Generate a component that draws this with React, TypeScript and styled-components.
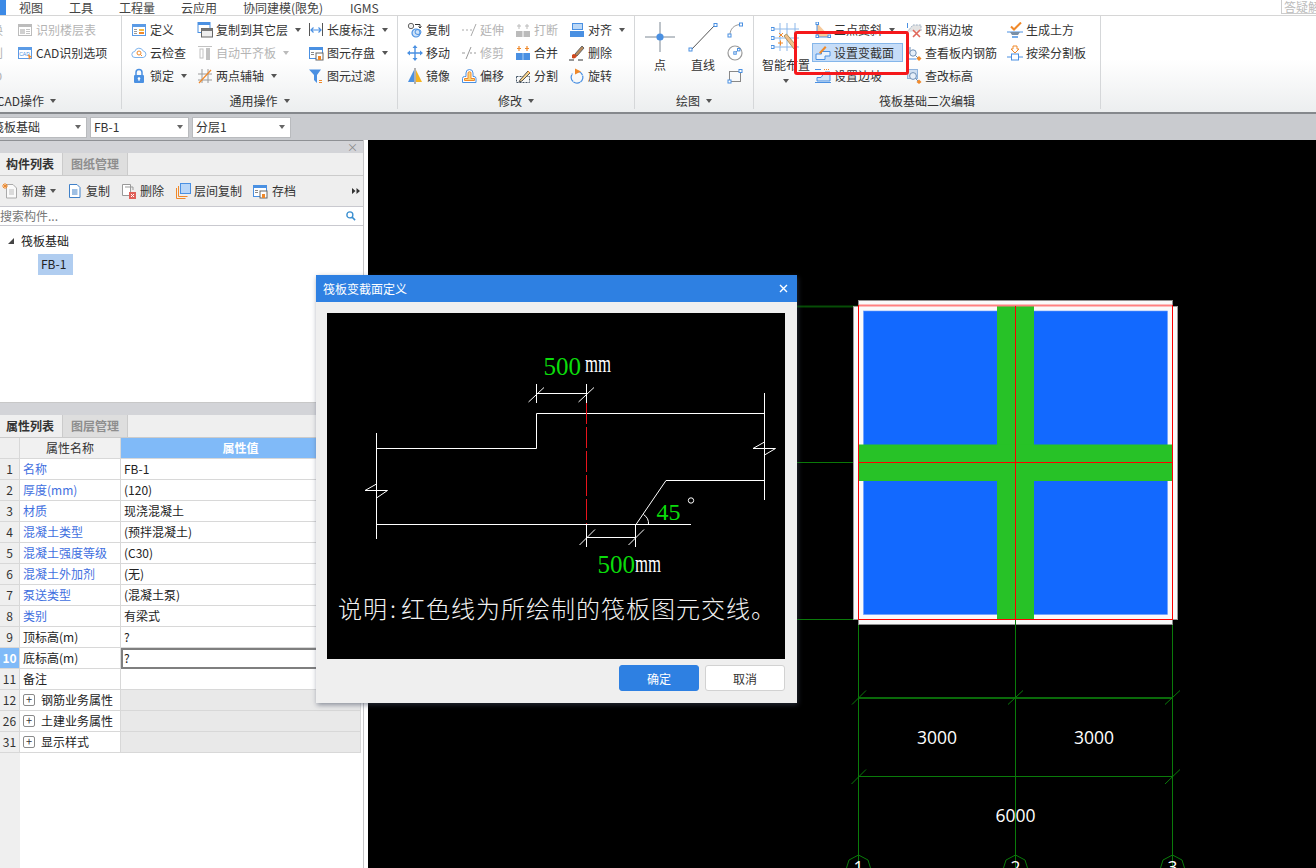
import React from "react";
import styled, { createGlobalStyle } from "styled-components";

const FONT = `"Noto Sans CJK SC", "Noto Sans", sans-serif`;
const B = "#4a90e2";
const O = "#f0892a";
const GR = "#c2c2c2";
const D = "#7c8894";

const Global = createGlobalStyle`
  html, body { margin: 0; padding: 0; overflow: hidden; background: #fff; }
  * { box-sizing: border-box; }
`;

const Root = styled.div`
  position: relative;
  width: 1316px;
  height: 868px;
  overflow: hidden;
  display: flex;
  flex-direction: column;
  font: 12px/16px ${FONT};
  color: #333;
`;

/* ---------- menu ---------- */
const MenuBar = styled.div`
  height: 16px;
  flex: none;
  display: flex;
  align-items: center;
  background: #fff;
  border-bottom: 1px solid #d6d6d6;
`;
const MenuStub = styled.div`
  width: 6px;
  height: 15px;
  margin: 0 13px 0 0;
  background: #3c8ae6;
`;
const MenuItem = styled.span<{ $w: number }>`
  width: ${(p) => p.$w}px;
  flex: none;
  white-space: nowrap;
  color: #444;
`;
const HelpBox = styled.div`
  position: absolute;
  left: 1281px;
  top: -1px;
  width: 40px;
  height: 15px;
  border: 1px solid #ccc;
  color: #bbb;
  padding-left: 2px;
  line-height: 14px;
  white-space: nowrap;
  overflow: hidden;
`;

/* ---------- ribbon ---------- */
const Ribbon = styled.div`
  height: 98px;
  flex: none;
  display: flex;
  background: linear-gradient(#fff 0%, #fff 45%, #eceeef 100%);
  border-bottom: 2px solid #85888c;
`;
const Group = styled.div<{ $w: number }>`
  width: ${(p) => p.$w}px;
  flex: none;
  display: flex;
  flex-direction: column;
  padding-top: 4px;
  border-right: 1px solid #d5d7d9;
  margin-bottom: 3px;
  overflow: hidden;
`;
const GroupBody = styled.div<{ $pad?: number; $end?: boolean }>`
  height: 73px;
  display: flex;
  padding-left: ${(p) => p.$pad ?? 6}px;
  justify-content: ${(p) => (p.$end ? "flex-end" : "flex-start")};
`;
const GroupLabel = styled.div<{ $endGap?: number }>`
  height: 16px;
  display: flex;
  align-items: center;
  justify-content: ${(p) => (p.$endGap ? "flex-end" : "center")};
  padding-right: ${(p) => p.$endGap ?? 0}px;
  gap: 6px;
  white-space: nowrap;
`;
const Col = styled.div<{ $w?: number }>`
  width: ${(p) => (p.$w ? `${p.$w}px` : "auto")};
  flex: none;
  display: flex;
  flex-direction: column;
  gap: 4px;
`;
const ShapeCol = styled(Col)`
  margin-left: -3px;
`;
const Item = styled.div<{ $off?: boolean; $on?: boolean }>`
  height: 19px;
  display: flex;
  align-items: center;
  gap: 3px;
  padding: 0 3px;
  white-space: nowrap;
  color: ${(p) => (p.$off ? "#b4b4b4" : "#333")};
  background: ${(p) => (p.$on ? "#c6ddf8" : "transparent")};
  outline: ${(p) => (p.$on ? "1px solid #85b6ea" : "none")};
  outline-offset: -1px;
`;
const Big = styled.div<{ $w: number }>`
  width: ${(p) => p.$w}px;
  flex: none;
  display: flex;
  flex-direction: column;
  align-items: center;
  padding-top: 2px;
  white-space: nowrap;
`;
const BigLabel = styled.div`
  margin-top: 5px;
  margin-bottom: 6px;
`;
const Caret = styled.i<{ $ml?: number; $c?: string }>`
  display: inline-block;
  flex: none;
  width: 0;
  height: 0;
  margin-left: ${(p) => p.$ml ?? 4}px;
  border-left: 3.5px solid transparent;
  border-right: 3.5px solid transparent;
  border-top: 4px solid ${(p) => p.$c ?? "#555"};
`;
const Ico = styled.svg<{ $s?: number }>`
  width: ${(p) => p.$s ?? 16}px;
  height: ${(p) => p.$s ?? 16}px;
  flex: none;
  display: block;
`;
const Callout = styled.div`
  position: absolute;
  left: 794px;
  top: 31px;
  width: 115px;
  height: 44px;
  border: 3px solid #f5181b;
  border-radius: 3px;
  pointer-events: none;
`;

/* ---------- selector bar ---------- */
const SelectBar = styled.div`
  height: 26px;
  flex: none;
  display: flex;
  align-items: center;
  gap: 3px;
  background: #c9cbcf;
`;
const Combo = styled.div<{ $w: number; $ml?: number }>`
  width: ${(p) => p.$w}px;
  margin-left: ${(p) => p.$ml ?? 0}px;
  height: 21px;
  display: flex;
  align-items: center;
  justify-content: space-between;
  padding: 0 5px 0 3px;
  background: #fff;
  border: 1px solid #b9bbbe;
  white-space: nowrap;
`;

/* ---------- left panels ---------- */
const Main = styled.div`
  flex: 1;
  min-height: 0;
  display: flex;
`;
const Side = styled.div`
  width: 368px;
  flex: none;
  display: flex;
  flex-direction: column;
  background: #fff;
`;
const Pane = styled.div<{ $h?: number }>`
  width: 364px;
  height: ${(p) => (p.$h ? `${p.$h}px` : "auto")};
  flex: ${(p) => (p.$h ? "none" : "1")};
  display: flex;
  flex-direction: column;
  border-right: 1px solid #c6c6c8;
  min-height: 0;
`;
const Caption = styled.div<{ $top?: boolean }>`
  height: ${(p) => (p.$top ? 13 : 12)}px;
  flex: none;
  display: flex;
  justify-content: flex-end;
  align-items: center;
  padding-right: 5px;
  background: #d3d4d8;
  color: #888;
  font-size: 11px;
  border-top: ${(p) => (p.$top ? "1px solid #8f9195" : "none")};
`;
const Tabs = styled.div`
  height: 23px;
  flex: none;
  display: flex;
  align-items: stretch;
  background: #efefef;
  border-bottom: 1px solid #cbcbcb;
`;
const Tab = styled.div<{ $on?: boolean }>`
  width: ${(p) => (p.$on ? 63 : 65)}px;
  text-align: ${(p) => (p.$on ? "left" : "center")};
  padding: 3px 0 0 ${(p) => (p.$on ? 6 : 0)}px;
  font-weight: 700;
  color: ${(p) => (p.$on ? "#333" : "#8e8e8e")};
  background: ${(p) => (p.$on ? "#efefef" : "#dedede")};
  border-right: 1px solid #cbcbcb;
`;
const Tools = styled.div`
  height: 30px;
  flex: none;
  display: flex;
  align-items: center;
  padding-left: 2px;
  background: #eeeeee;
`;
const ToolBtn = styled.div<{ $w: number; $gap?: number }>`
  width: ${(p) => p.$w}px;
  flex: none;
  display: flex;
  align-items: center;
  gap: ${(p) => p.$gap ?? 4}px;
  white-space: nowrap;
`;
const More = styled.svg`
  margin-left: auto;
  margin-right: 3px;
  width: 8px;
  height: 6px;
  flex: none;
`;
const Search = styled.div`
  height: 20px;
  flex: none;
  display: flex;
  align-items: center;
  justify-content: space-between;
  padding-right: 6px;
  color: #777;
  background: #fff;
  border-top: 1px solid #c9c9cf;
  border-bottom: 1px solid #c9c9cf;
`;
const Tree = styled.div`
  flex: 1;
  padding-top: 4px;
  background: #fff;
`;
const TreeRoot = styled.div`
  height: 22px;
  display: flex;
  align-items: center;
  gap: 7px;
  padding-left: 8px;
  color: #222;
`;
const TreeLeaf = styled.div`
  width: 35px;
  height: 21px;
  margin: 2px 0 0 38px;
  padding: 2px 0 0 3px;
  background: #b0cdf0;
  color: #222;
`;
const Gap = styled.div`
  height: 3px;
  flex: none;
  background: #fff;
  border-bottom: 1px solid #c8c8c8;
`;

const Table = styled.div`
  flex: 1;
  width: 361px;
  display: flex;
  flex-direction: column;
  background: linear-gradient(to right, #efefef 20px, #fff 20px);
`;
const Row = styled.div`
  height: 21px;
  flex: none;
  display: grid;
  grid-template-columns: 20px 101px 240px;
`;
const Cell = styled.div`
  min-width: 0;
  padding-left: 3px;
  line-height: 20px;
  white-space: nowrap;
  border-right: 1px solid #d8d8d8;
  border-bottom: 1px solid #d8d8d8;
  background: #fff;
`;
const NumCell = styled(Cell)<{ $on?: boolean }>`
  padding: 0;
  text-align: center;
  font-weight: ${(p) => (p.$on ? 700 : 400)};
  color: ${(p) => (p.$on ? "#fff" : "#333")};
  background: ${(p) => (p.$on ? "#80baf8" : "#efefef")};
`;
const NameCell = styled(Cell)<{ $blue?: boolean }>`
  color: ${(p) => (p.$blue ? "#3f6fe0" : "#222")};
`;
const GroupName = styled(Cell)`
  display: flex;
  align-items: center;
  gap: 6px;
  color: #222;
`;
const ValueCell = styled(Cell)<{ $focus?: boolean; $gray?: boolean }>`
  color: #222;
  background: ${(p) => (p.$gray ? "#e9e9e9" : "#fff")};
  outline: ${(p) => (p.$focus ? "2px solid #7f7f7f" : "none")};
  outline-offset: -2px;
`;
const HeadName = styled(Cell)`
  text-align: center;
  padding: 0;
  background: #f1f1f1;
`;
const HeadValue = styled(Cell)`
  text-align: center;
  padding: 0;
  font-weight: 700;
  color: #fff;
  background: #80baf8;
`;
const Plus = styled.span`
  width: 12px;
  height: 12px;
  flex: none;
  border: 1px solid #8a8a8a;
  border-radius: 2px;
  background: #fff;
  font-size: 11px;
  line-height: 9px;
  text-align: center;
  color: #333;
`;

/* ---------- drawing area ---------- */
const Canvas = styled.div`
  flex: 1;
  background: #000;
`;
const Plot = styled.svg`
  display: block;
  width: 948px;
  height: 728px;
`;
const AxisText = styled.text`
  font: 17.5px "Open Sans", sans-serif;
  fill: #fff;
`;

/* ---------- dialog ---------- */
const Dialog = styled.div`
  position: absolute;
  left: 316px;
  top: 275px;
  width: 481px;
  height: 428px;
  display: flex;
  flex-direction: column;
  background: #efefef;
  box-shadow: 1px 2px 5px rgba(60, 70, 90, 0.55);
`;
const DialogTitle = styled.div`
  height: 27px;
  flex: none;
  display: flex;
  align-items: center;
  justify-content: space-between;
  padding: 0 9px 0 7px;
  color: #fff;
  background: #2e80e2;
`;
const DialogBody = styled.div`
  margin: 11px 12px 0 11px;
  height: 346px;
  flex: none;
  background: #000;
`;
const Sketch = styled.svg`
  display: block;
  width: 458px;
  height: 346px;
`;
const DialogFoot = styled.div`
  display: flex;
  justify-content: flex-end;
  gap: 6px;
  padding: 6px 12px 0 0;
`;
const DialogBtn = styled.div<{ $primary?: boolean }>`
  width: 80px;
  height: 26px;
  line-height: 25px;
  text-align: center;
  border-radius: 3px;
  color: ${(p) => (p.$primary ? "#fff" : "#333")};
  background: ${(p) => (p.$primary ? "#2e80e2" : "#fff")};
  border: 1px solid ${(p) => (p.$primary ? "#2e80e2" : "#d2d2d2")};
`;
const SerifText = styled.text<{ $s: number; $c: string }>`
  font: ${(p) => p.$s}px "Liberation Serif", serif;
  fill: ${(p) => p.$c};
`;
const NoteText = styled.text`
  font: 300 24px ${FONT};
  fill: #f2f2f2;
  letter-spacing: 1px;
`;

/* ---------- icons ---------- */
const win = (c = B) => (
  <>
    <rect x="1.5" y="2.5" width="13" height="11" fill="#fff" stroke={c} />
    <rect x="1" y="2" width="14" height="3" fill={c} />
  </>
);

const icons: Record<string, React.ReactNode> = {
  floors: (
    <>
      {win("#bcbcbc")}
      <rect x="3" y="7" width="5" height="5" fill="#d0d0d0" />
      <path d="M9 7.5h4M9 9.5h4M9 11.5h4" stroke="#c4c4c4" />
    </>
  ),
  cad: (
    <>
      {win("#5b9be6")}
      <text x="2.2" y="11" fontSize="5" fontFamily="Liberation Sans" fill="#4a90e2">CAD</text>
      <path d="M11 9l4 3-2 .5-1 2.5z" fill={O} />
    </>
  ),
  define: (
    <>
      {win("#5b9be6")}
      <path d="M3 7.5h3M3 9.5h3M3 11.5h3" stroke="#999" />
      <rect x="8" y="7" width="5" height="2" fill="#f5b942" />
      <rect x="8" y="10" width="5" height="2" fill={O} />
    </>
  ),
  cloud: (
    <>
      <path d="M4 12.5a3 3 0 0 1-.3-6 4.5 4.5 0 0 1 8.5-.5 3.3 3.3 0 0 1 0 6.5z" fill="#fff" stroke="#7db2ec" />
      <circle cx="8" cy="8" r="2" fill="none" stroke={O} />
      <path d="M9.5 9.5l1.5 1.5" stroke={O} />
    </>
  ),
  lock: (
    <>
      <path d="M5 7V4.5a3 3 0 0 1 6 0V7" fill="none" stroke={B} strokeWidth="1.5" />
      <rect x="3" y="7" width="10" height="8" rx="1" fill={B} />
      <circle cx="8" cy="10.5" r="1.3" fill="#fff" />
      <path d="M8 11v2" stroke="#fff" />
    </>
  ),
  copyLayer: (
    <>
      <rect x="1" y="0.5" width="12" height="10" fill="#fff" stroke={B} />
      <rect x="1" y="0" width="12" height="3" fill={B} />
      <rect x="4.5" y="6.5" width="11" height="8.5" fill="#eee" stroke="#666" />
      <rect x="4.5" y="6.5" width="11" height="2.5" fill="#777" />
    </>
  ),
  flat: (
    <>
      <path d="M1 1.5h14" stroke={GR} />
      <rect x="3" y="4" width="3" height="9" fill="none" stroke={GR} />
      <rect x="9" y="3" width="4" height="12" fill={GR} />
    </>
  ),
  twoPoint: (
    <>
      <path d="M1 6h14M1 12h14M5 1v14M11 1v14" stroke="#9a9a9a" />
      <path d="M2 15L14 2" stroke={O} strokeWidth="1.2" />
    </>
  ),
  dim: (
    <>
      <path d="M1.5 1v13M14.5 1v13" stroke="#555" />
      <path d="M3 8h10M5.5 5.5L3 8l2.5 2.5M10.5 5.5L13 8l-2.5 2.5" fill="none" stroke={B} strokeWidth="1.2" />
    </>
  ),
  store: (
    <>
      {win()}
      <path d="M3 7.5h3M3 9.5h3" stroke="#888" />
      <rect x="8" y="8" width="7" height="7" fill="#fff" stroke="#666" />
      <rect x="10" y="11" width="3" height="4" fill={O} />
    </>
  ),
  filter: (
    <>
      <path d="M1 1.5h12L9 7v8L6 12V7z" fill={B} />
      <path d="M11 12.5h3M11 14.5h3" stroke={O} />
    </>
  ),
  copy: (
    <>
      <circle cx="4" cy="4" r="2.7" fill="#eee" stroke="#666" />
      <circle cx="9" cy="11" r="4" fill="#cfe3f8" stroke={B} strokeWidth="1.2" />
      <ellipse cx="11" cy="10" rx="3" ry="2.5" fill="none" stroke={B} />
      <path d="M8 2.5h5v3M11.5 4.5l1.5 1.5 1.5-1.5" fill="none" stroke="#333" />
    </>
  ),
  move: (
    <>
      <path d="M3 8h10M8 3v10" stroke={B} strokeWidth="1.4" />
      <path d="M8 0l2.5 3h-5zM8 16l2.5-3h-5zM0 8l3-2.5v5zM16 8l-3-2.5v5z" fill={B} />
    </>
  ),
  mirror: (
    <>
      <path d="M7 2L1 14h6z" fill={B} />
      <path d="M9 2l6 12H9z" fill="#f5b31f" />
      <path d="M8 0v16" stroke="#666" />
    </>
  ),
  extend: <path d="M1 8h2M5 8h2M9 8h2M10 14L15 2" stroke="#aaa" fill="none" />,
  trim: <path d="M1 8h3M9 8h2M13 8h2M5 14L10 2" stroke="#999" fill="none" />,
  offset: (
    <>
      <path d="M1.5 14.5v-4a2 2 0 0 1 2-2H5V5a3.5 3.5 0 0 1 7 0v3.5h1a2 2 0 0 1 2 2v4z" fill="#fff" stroke={B} />
      <path d="M3.5 12.5v-2h3.5V5.2a1.5 1.5 0 0 1 3 0v5.3h3.5v2z" fill="#fbd47a" stroke={O} />
    </>
  ),
  breakIt: (
    <>
      <rect x="1" y="9" width="6.5" height="6" fill="#bbb" />
      <rect x="8.5" y="9" width="6.5" height="6" fill="#bbb" />
      <path d="M4 2v5M12 2v5M2 4h4M10 4h4" stroke="#bbb" />
    </>
  ),
  merge: (
    <>
      <rect x="1" y="8" width="14" height="7" fill={B} />
      <path d="M8 8v7" stroke="#a8ccf2" />
      <path d="M4 1v5M12 1v5M2 3.5h4M10 3.5h4" stroke={O} strokeWidth="1.2" />
    </>
  ),
  split: (
    <>
      <rect x="1.5" y="8.5" width="13" height="6" fill="none" stroke="#456" strokeDasharray="2 1" />
      <path d="M5 12L13 3l2 2-8 8-3 1z" fill="#f6d28a" stroke="#555" />
      <path d="M13 3l2 2" stroke={O} />
    </>
  ),
  align: (
    <>
      <rect x="3.5" y="1.5" width="10" height="6" fill="#bcd8f6" stroke={B} />
      <rect x="1" y="9" width="14" height="6" fill={B} />
    </>
  ),
  erase: (
    <>
      <path d="M6 9l7-8 2 2-7 8z" fill="#b98a5a" stroke="#666" />
      <path d="M3 10a3 3 0 0 1 4 0l1 1c-1 2-3 3-5 2z" fill="#d0481c" />
      <path d="M0 15h5M9 15h5" stroke="#333" />
    </>
  ),
  rotate: (
    <>
      <path d="M8 3.5a5.8 5.8 0 1 1-4.5 2.2" fill="none" stroke={B} strokeWidth="1.2" strokeDasharray="7 .5" />
      <path d="M6 0.5l6 3-6 3z" fill={O} />
    </>
  ),
  arc: (
    <>
      <path d="M3 13C3 7 7 3 13 2.5" fill="none" stroke="#999" />
      <rect x="1" y="12" width="3" height="3" fill="#fff" stroke={B} />
      <rect x="12.5" y="1" width="3" height="3" fill="#fff" stroke={B} />
    </>
  ),
  circle: (
    <>
      <circle cx="8" cy="8" r="7" fill="none" stroke="#9a9a9a" strokeWidth="1.2" />
      <path d="M8 8l3.5-3.5" stroke="#999" />
      <rect x="6.8" y="6.8" width="2.4" height="2.4" fill="#fff" stroke={B} />
      <rect x="10.5" y="3.5" width="2.4" height="2.4" fill="#fff" stroke={B} />
    </>
  ),
  rect: (
    <>
      <rect x="2.5" y="3.5" width="11" height="10" fill="none" stroke="#888" />
      <rect x="1" y="12" width="3" height="3" fill="#fff" stroke={B} />
      <rect x="12" y="1.5" width="3" height="3" fill="#fff" stroke={B} />
    </>
  ),
  threePoint: (
    <>
      <path d="M2 1v14h13z" fill="#f6c99a" />
      <path d="M2 1v14h13" fill="none" stroke={B} />
      <rect x="1" y="0" width="2.5" height="2.5" fill="#fff" stroke={B} />
      <rect x="1" y="13" width="2.5" height="2.5" fill="#fff" stroke={B} />
      <rect x="13" y="13" width="2.5" height="2.5" fill="#fff" stroke={B} />
    </>
  ),
  section: (
    <>
      <path d="M1 14.5V9h5.5V6.5H15V11h-5v3.5z" fill="#eaf3fd" stroke={B} />
      <path d="M4 7.5L10 1l1.5 1.5-6 6.5z" fill={O} />
    </>
  ),
  slope: (
    <>
      <path d="M0 14.5h16M0 1.5h6" stroke={B} />
      <path d="M2 13V9.5h4L10 4h5v9z" fill="#d3e5f9" stroke={B} />
      <path d="M9 1.5h6" stroke={O} strokeDasharray="1 1" />
    </>
  ),
  cancelSlope: (
    <>
      <path d="M1 10l6-7h8v6" fill="#e3e3e3" stroke="#9db0c4" strokeDasharray="2 1" />
      <path d="M1.5 1v5" stroke={B} />
      <path d="M7 8l7 7M14 8l-7 7" stroke="#e0685a" strokeWidth="1.6" />
    </>
  ),
  rebar: (
    <>
      <path d="M1.5 1v13h9" fill="none" stroke={B} />
      <path d="M4 2v7" stroke="#6f8fb5" />
      <circle cx="7" cy="8" r="3.2" fill="#e6eff9" stroke="#6f8fb5" />
      <path d="M9.5 10.5l3 3" stroke="#6f8fb5" />
      <path d="M13 11l2.5 2.5L13 16l-2.5-2.5z" fill={O} />
    </>
  ),
  level: (
    <>
      <rect x="1.5" y="1.5" width="10" height="9" fill="#cfdff2" stroke="#8fb4de" />
      <circle cx="7" cy="8" r="3.4" fill="#e6eff9" stroke="#6f8fb5" />
      <path d="M9.5 10.5l3 3" stroke="#6f8fb5" />
      <path d="M13 11.5l2.5 2.5-2.5 2-2.5-2z" fill={O} />
    </>
  ),
  earth: (
    <>
      <path d="M4 4.5l3 3 7-7" fill="none" stroke={O} strokeWidth="2" />
      <path d="M0 10h16" stroke={B} />
      <path d="M3 10l2 3h6l2-3z" fill="#7a8fa6" />
      <path d="M5 15h6" stroke={B} strokeWidth="1.5" />
    </>
  ),
  splitBoard: (
    <>
      <path d="M6 1h4v3h2L8 8 4 4h2z" fill="#fff" stroke={O} />
      <rect x="4.5" y="9" width="7" height="6" fill="#fff" stroke={B} />
      <path d="M0 12h4.5M11.5 12H16" stroke={B} />
    </>
  ),
  fresh: (
    <>
      <path d="M4.5 1.5H11l3.5 3.5v10h-10z" fill="#fafafa" stroke="#aaa" />
      <path d="M7 7h5M7 9h5M7 11h5" stroke="#bbb" />
      <path d="M1 1l4 4M5 1L1 5M3 0v6M0 3h6" stroke={O} />
    </>
  ),
  paper: (
    <>
      <path d="M1.5 1.5H9l3 3v10H1.5z" fill="#fff" stroke="#3f80c8" />
      <path d="M4 7h5.5M4 9h5.5M4 11h5.5" stroke="#3f80c8" />
    </>
  ),
  remove: (
    <>
      <path d="M1.5 1.5h8v11h-8z" fill="#fff" stroke="#999" />
      <path d="M4 4h8v3" fill="none" stroke="#999" />
      <rect x="8" y="9" width="7" height="7" fill="#e0605a" />
      <path d="M10 11l3 3M13 11l-3 3" stroke="#fff" />
    </>
  ),
  layerCopy: (
    <>
      <path d="M1.5 5v10.5h9" fill="none" stroke={O} />
      <path d="M3.5 3v10.5h9" fill="none" stroke={O} />
      <rect x="5.5" y="0.5" width="10" height="10" fill="#b8d6f8" stroke={B} />
    </>
  ),
  search: (
    <>
      <circle cx="6.5" cy="6.5" r="4" fill="#fff" stroke="#3a8fd0" strokeWidth="1.8" />
      <path d="M9.5 9.5l4 4" stroke="#3a8fd0" strokeWidth="2" />
    </>
  ),
};

const Icon = ({ name, s }: { name: string; s?: number }) => (
  <Ico viewBox="0 0 16 16" $s={s}>
    {icons[name]}
  </Ico>
);

const PointIcon = () => (
  <Ico viewBox="0 0 30 30" $s={30}>
    <path d="M0 15h30M15 0v30" stroke={D} />
    <circle cx="15" cy="15" r="3.6" fill={B} />
  </Ico>
);
const LineIcon = () => (
  <Ico viewBox="0 0 30 30" $s={30}>
    <path d="M3 28L27 3" stroke="#555" />
    <rect x="1" y="26" width="3" height="3" fill="#fff" stroke={B} />
    <rect x="26" y="1.5" width="3" height="3" fill="#fff" stroke={B} />
  </Ico>
);
const SmartIcon = () => (
  <Ico viewBox="0 0 30 30" $s={30}>
    <path d="M2 7h26M2 16h26M2 25h26M9 1v28M16 1v28M24 1v28" stroke="#8db8ea" />
    <rect x="0" y="5.5" width="3" height="3" fill="#fff" stroke={B} />
    <rect x="0" y="14.5" width="3" height="3" fill="#fff" stroke={B} />
    <rect x="0" y="23.5" width="3" height="3" fill="#fff" stroke={B} />
    <path d="M13 14l10 13 3-2.5L15.5 12z" fill="#f4c08a" stroke="#a96" />
    <path d="M8 11l4 4M12 11l-4 4M7 21h5M9.5 18.5v5" stroke={O} />
  </Ico>
);

type Tool = { i: string; t: string; off?: boolean; caret?: boolean; on?: boolean };

const Tools3 = ({ w, items }: { w?: number; items: Tool[] }) => (
  <Col $w={w}>
    {items.map((it) => (
      <Item key={it.t} $off={it.off} $on={it.on}>
        <Icon name={it.i} />
        {it.t}
        {it.caret && <Caret $c={it.off ? "#bbb" : "#555"} />}
      </Item>
    ))}
  </Col>
);

const Rows: [string, string, boolean][] = [
  ["名称", "FB-1", true],
  ["厚度(mm)", "(120)", true],
  ["材质", "现浇混凝土", true],
  ["混凝土类型", "(预拌混凝土)", true],
  ["混凝土强度等级", "(C30)", true],
  ["混凝土外加剂", "(无)", true],
  ["泵送类型", "(混凝土泵)", true],
  ["类别", "有梁式", true],
  ["顶标高(m)", "?", false],
  ["底标高(m)", "?", false],
  ["备注", "", false],
];

const DrawingArea = () => (
  <Plot viewBox="368 140 948 728">
    <g stroke="#0a7a0a" fill="none">
      <path d="M797 306.5H859" stroke="#064d06" strokeWidth="2" />
      <path d="M797 462.5H859M797 619.5H859" />
      <path d="M858.5 619V868M1015.5 619V868M1172.5 619V868" />
      <path d="M858.5 698H1172.5" strokeWidth="2" stroke="#0a6a0a" />
      <path d="M858.5 776.5H1172.5" />
      <path d="M852 704.5L866 690.5M1008 704.5L1023 690.5M1165 704.5L1180 690.5M851.5 784L866 769.5M1165 784L1180 769.5" />
      <path d="M846.5 868L849 860L858.5 855L868 860L870.5 868M1003.5 868L1006 860L1015.5 855L1025 860L1027.5 868M1160.5 868L1163 860L1172.5 855L1182 860L1184.5 868" />
    </g>
    <rect x="853.5" y="306.5" width="324" height="313" fill="#fafafa" stroke="#9c9c9c" />
    <rect x="858.5" y="300.5" width="314" height="324" fill="#fafafa" stroke="#8f8f8f" />
    <rect x="863.5" y="311" width="304" height="303.5" fill="#1269ff" stroke="#6c9dff" strokeWidth="0.6" />
    <rect x="997" y="306" width="37" height="313" fill="#27c227" />
    <rect x="859" y="444.5" width="313" height="36.5" fill="#27c227" />
    <path d="M859 305.5H1172" stroke="#ff8080" strokeWidth="2" />
    <g stroke="#f00" fill="none" shapeRendering="crispEdges">
      <path d="M858.5 305V619.5H1172.5V305" />
      <path d="M1015.5 306V619M859 462.5H1172" />
    </g>
    <path d="M1015.5 620V625" stroke="#0a7a0a" />
    <AxisText x="937" y="743.5" textAnchor="middle">3000</AxisText>
    <AxisText x="1094" y="743.5" textAnchor="middle">3000</AxisText>
    <AxisText x="1015.5" y="822" textAnchor="middle">6000</AxisText>
    <AxisText x="858.5" y="874" textAnchor="middle">1</AxisText>
    <AxisText x="1015.5" y="874" textAnchor="middle">2</AxisText>
    <AxisText x="1172.5" y="874" textAnchor="middle">3</AxisText>
  </Plot>
);

const SectionSketch = () => (
  <Sketch viewBox="327 313 458 346">
    <g stroke="#fff" fill="none">
      <path d="M376.5 433V539M376.5 448.5H536.5V413.5H764.5M764.5 393V500M666 480.5H764.5L764.5 480.5M376.5 524.5H691" />
      <path d="M666 480.5L636 524.5" />
      <path d="M643.5 514.5Q649 518 648.5 524.5" />
      <path d="M536.5 393.5H586.5M536.5 384V403M586.5 384V403M528.5 402L544 387.5M578.5 402L594 387.5" />
      <path d="M586.5 537.5H635.5M586.5 524V547M635.5 524V547M579.5 545L595 529.5M628.5 545L644 529.5" />
      <path d="M376.5 484L365 490.5H387.5L376.5 498M764.5 442L753 448.5H775.5L764.5 455" />
      <circle cx="691" cy="500.5" r="2.7" />
    </g>
    <path d="M586.5 403V524" stroke="#e8141c" strokeDasharray="21 3" />
    <SerifText x="543.5" y="375" $s={25} $c="#0bdc0b">500</SerifText>
    <SerifText x="585" y="371.5" $s={25} $c="#fff" textLength={26} lengthAdjust="spacingAndGlyphs">mm</SerifText>
    <SerifText x="597.5" y="573" $s={25} $c="#0bdc0b">500</SerifText>
    <SerifText x="635" y="571.5" $s={25} $c="#fff" textLength={26} lengthAdjust="spacingAndGlyphs">mm</SerifText>
    <SerifText x="656.5" y="520" $s={24} $c="#0bdc0b">45</SerifText>
    <NoteText y="618">
      <tspan x="338">说明</tspan>
      <tspan x="390">:</tspan>
      <tspan x="401">红色线为所绘制的筏板图元交线。</tspan>
    </NoteText>
  </Sketch>
);

export default function App() {
  return (
    <Root>
      <Global />
      <MenuBar>
        <MenuStub />
        <MenuItem $w={50}>视图</MenuItem>
        <MenuItem $w={50}>工具</MenuItem>
        <MenuItem $w={62}>工程量</MenuItem>
        <MenuItem $w={62}>云应用</MenuItem>
        <MenuItem $w={107}>协同建模(限免)</MenuItem>
        <MenuItem $w={40}>IGMS</MenuItem>
      </MenuBar>
      <HelpBox>答疑解</HelpBox>

      <Ribbon>
        <Group $w={122}>
          <GroupBody $end $pad={0}>
            <Tools3
              w={57}
              items={[
                { i: "floors", t: "转换", off: true },
                { i: "floors", t: "识别", off: true },
                { i: "floors", t: "CAD", off: true },
              ]}
            />
            <Tools3
              w={107}
              items={[
                { i: "floors", t: "识别楼层表", off: true },
                { i: "cad", t: "CAD识别选项" },
              ]}
            />
          </GroupBody>
          <GroupLabel $endGap={65}>
            CAD操作
            <Caret $ml={0} />
          </GroupLabel>
        </Group>

        <Group $w={276}>
          <GroupBody>
            <Tools3
              w={66}
              items={[
                { i: "define", t: "定义" },
                { i: "cloud", t: "云检查" },
                { i: "lock", t: "锁定", caret: true },
              ]}
            />
            <Tools3
              w={111}
              items={[
                { i: "copyLayer", t: "复制到其它层", caret: true },
                { i: "flat", t: "自动平齐板", off: true, caret: true },
                { i: "twoPoint", t: "两点辅轴", caret: true },
              ]}
            />
            <Tools3
              items={[
                { i: "dim", t: "长度标注", caret: true },
                { i: "store", t: "图元存盘", caret: true },
                { i: "filter", t: "图元过滤" },
              ]}
            />
          </GroupBody>
          <GroupLabel>
            通用操作
            <Caret $ml={0} />
          </GroupLabel>
        </Group>

        <Group $w={237}>
          <GroupBody>
            <Tools3
              w={54}
              items={[
                { i: "copy", t: "复制" },
                { i: "move", t: "移动" },
                { i: "mirror", t: "镜像" },
              ]}
            />
            <Tools3
              w={54}
              items={[
                { i: "extend", t: "延伸", off: true },
                { i: "trim", t: "修剪", off: true },
                { i: "offset", t: "偏移" },
              ]}
            />
            <Tools3
              w={54}
              items={[
                { i: "breakIt", t: "打断", off: true },
                { i: "merge", t: "合并" },
                { i: "split", t: "分割" },
              ]}
            />
            <Tools3
              items={[
                { i: "align", t: "对齐", caret: true },
                { i: "erase", t: "删除" },
                { i: "rotate", t: "旋转" },
              ]}
            />
          </GroupBody>
          <GroupLabel>
            修改
            <Caret $ml={0} />
          </GroupLabel>
        </Group>

        <Group $w={119}>
          <GroupBody>
            <Big $w={38}>
              <PointIcon />
              <BigLabel>点</BigLabel>
            </Big>
            <Big $w={48}>
              <LineIcon />
              <BigLabel>直线</BigLabel>
            </Big>
            <ShapeCol>
              <Item>
                <Icon name="arc" />
              </Item>
              <Item>
                <Icon name="circle" />
              </Item>
              <Item>
                <Icon name="rect" />
              </Item>
            </ShapeCol>
          </GroupBody>
          <GroupLabel>
            绘图
            <Caret $ml={0} />
          </GroupLabel>
        </Group>

        <Group $w={347}>
          <GroupBody>
            <Big $w={52}>
              <SmartIcon />
              <BigLabel>智能布置</BigLabel>
              <Caret $ml={0} />
            </Big>
            <Tools3
              w={91}
              items={[
                { i: "threePoint", t: "三点变斜", caret: true },
                { i: "section", t: "设置变截面", on: true },
                { i: "slope", t: "设置边坡" },
              ]}
            />
            <Tools3
              w={101}
              items={[
                { i: "cancelSlope", t: "取消边坡" },
                { i: "rebar", t: "查看板内钢筋" },
                { i: "level", t: "查改标高" },
              ]}
            />
            <Tools3
              items={[
                { i: "earth", t: "生成土方" },
                { i: "splitBoard", t: "按梁分割板" },
              ]}
            />
          </GroupBody>
          <GroupLabel>筏板基础二次编辑</GroupLabel>
        </Group>
      </Ribbon>
      <Callout />

      <SelectBar>
        <Combo $w={99} $ml={-12}>
          筏板基础
          <Caret $c="#666" />
        </Combo>
        <Combo $w={99}>
          FB-1
          <Caret $c="#666" />
        </Combo>
        <Combo $w={99}>
          分层1
          <Caret $c="#666" />
        </Combo>
      </SelectBar>

      <Main>
        <Side>
          <Pane $h={260}>
            <Caption $top>×</Caption>
            <Tabs>
              <Tab $on>构件列表</Tab>
              <Tab>图纸管理</Tab>
            </Tabs>
            <Tools>
              <ToolBtn $w={66}>
                <Icon name="fresh" />
                <span>新建</span>
                <Caret $ml={0} />
              </ToolBtn>
              <ToolBtn $w={53} $gap={2}>
                <Icon name="paper" />
                复制
              </ToolBtn>
              <ToolBtn $w={54} $gap={3}>
                <Icon name="remove" />
                删除
              </ToolBtn>
              <ToolBtn $w={77} $gap={3}>
                <Icon name="layerCopy" />
                层间复制
              </ToolBtn>
              <ToolBtn $w={50}>
                <Icon name="store" />
                存档
              </ToolBtn>
              <More viewBox="0 0 8 6">
                <path d="M0 0l3.5 3L0 6zM4.5 0L8 3 4.5 6z" fill="#333" />
              </More>
            </Tools>
            <Search>
              搜索构件...
              <Icon name="search" s={12} />
            </Search>
            <Tree>
              <TreeRoot>
                <svg width="6" height="6" viewBox="0 0 6 6">
                  <path d="M6 0v6H0z" fill="#444" />
                </svg>
                筏板基础
              </TreeRoot>
              <TreeLeaf>FB-1</TreeLeaf>
            </Tree>
          </Pane>
          <Gap />
          <Pane>
            <Caption />
            <Tabs>
              <Tab $on>属性列表</Tab>
              <Tab>图层管理</Tab>
            </Tabs>
            <Table>
              <Row>
                <NumCell />
                <HeadName>属性名称</HeadName>
                <HeadValue>属性值</HeadValue>
              </Row>
              {Rows.map(([name, value, blue], i) => (
                <Row key={name}>
                  <NumCell $on={i === 9}>{i + 1}</NumCell>
                  <NameCell $blue={blue}>{name}</NameCell>
                  <ValueCell $focus={i === 9}>{value}</ValueCell>
                </Row>
              ))}
              {[
                [12, "钢筋业务属性"],
                [26, "土建业务属性"],
                [31, "显示样式"],
              ].map(([n, label]) => (
                <Row key={n}>
                  <NumCell>{n}</NumCell>
                  <GroupName>
                    <Plus>+</Plus>
                    {label}
                  </GroupName>
                  <ValueCell $gray />
                </Row>
              ))}
            </Table>
          </Pane>
        </Side>
        <Canvas>
          <DrawingArea />
        </Canvas>
      </Main>

      <Dialog>
        <DialogTitle>
          筏板变截面定义
          <svg width="9" height="9" viewBox="0 0 9 9">
            <path d="M1 1l7 7M8 1L1 8" stroke="#fff" strokeWidth="1.4" />
          </svg>
        </DialogTitle>
        <DialogBody>
          <SectionSketch />
        </DialogBody>
        <DialogFoot>
          <DialogBtn $primary>确定</DialogBtn>
          <DialogBtn>取消</DialogBtn>
        </DialogFoot>
      </Dialog>
    </Root>
  );
}
